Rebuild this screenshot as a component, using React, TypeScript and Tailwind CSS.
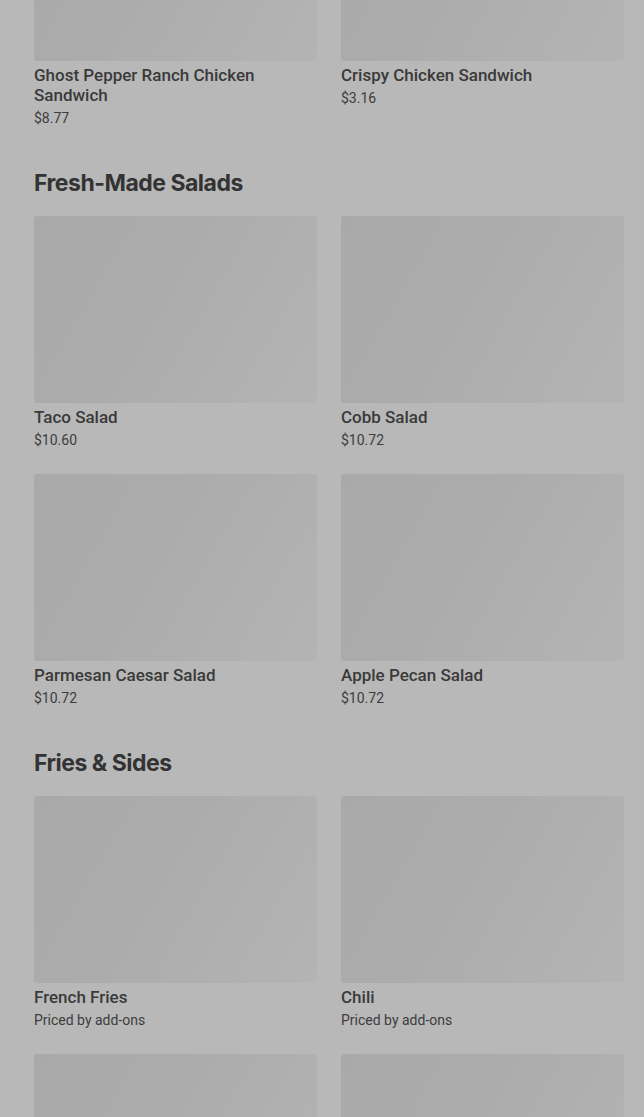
import React from "react";

type Item = { name: string; price?: string };
type Section = { title?: string; items: Item[] };

const sections: Section[] = [
  {
    items: [
      { name: "Ghost Pepper Ranch Chicken Sandwich", price: "$8.77" },
      { name: "Crispy Chicken Sandwich", price: "$3.16" },
    ],
  },
  {
    title: "Fresh-Made Salads",
    items: [
      { name: "Taco Salad", price: "$10.60" },
      { name: "Cobb Salad", price: "$10.72" },
      { name: "Parmesan Caesar Salad", price: "$10.72" },
      { name: "Apple Pecan Salad", price: "$10.72" },
    ],
  },
  {
    title: "Fries & Sides",
    items: [
      { name: "French Fries", price: "Priced by add-ons" },
      { name: "Chili", price: "Priced by add-ons" },
      { name: "" },
      { name: "" },
    ],
  },
];

function Card({ item }: { item: Item }) {
  return (
    <div className="flex flex-col">
      <div className="h-[187px] rounded-[3px] bg-[linear-gradient(120deg,#a9a9a9_0%,#acacac_45%,#b4b4b4_100%)]" />
      {item.name && (
        <div className="mt-1 text-[17px] leading-[20px] font-medium text-[#3a3a3a] font-['Roboto',sans-serif]">
          {item.name}
        </div>
      )}
      {item.price && (
        <div className="mt-[3px] text-[14px] leading-[20px] text-[#3d3d3d] font-['Roboto',sans-serif]">
          {item.price}
        </div>
      )}
    </div>
  );
}

export default function App() {
  return (
    <div className="h-[1117px] bg-[#b8b8b8] overflow-hidden">
      <div className="pl-[34px] pr-[20px] mt-[-126px]">
        {sections.map((s, i) => (
          <div key={i} className={i === 0 ? "" : "mt-[39px]"}>
            {s.title && (
              <h2 className="text-[23px] leading-[32px] font-bold tracking-[-0.5px] text-[#333333] mb-[17px] font-['Inter',sans-serif]">
                {s.title}
              </h2>
            )}
            <div className="grid grid-cols-2 gap-x-6 gap-y-6">
              {s.items.map((it, j) => (
                <Card key={j} item={it} />
              ))}
            </div>
          </div>
        ))}
      </div>
    </div>
  );
}
